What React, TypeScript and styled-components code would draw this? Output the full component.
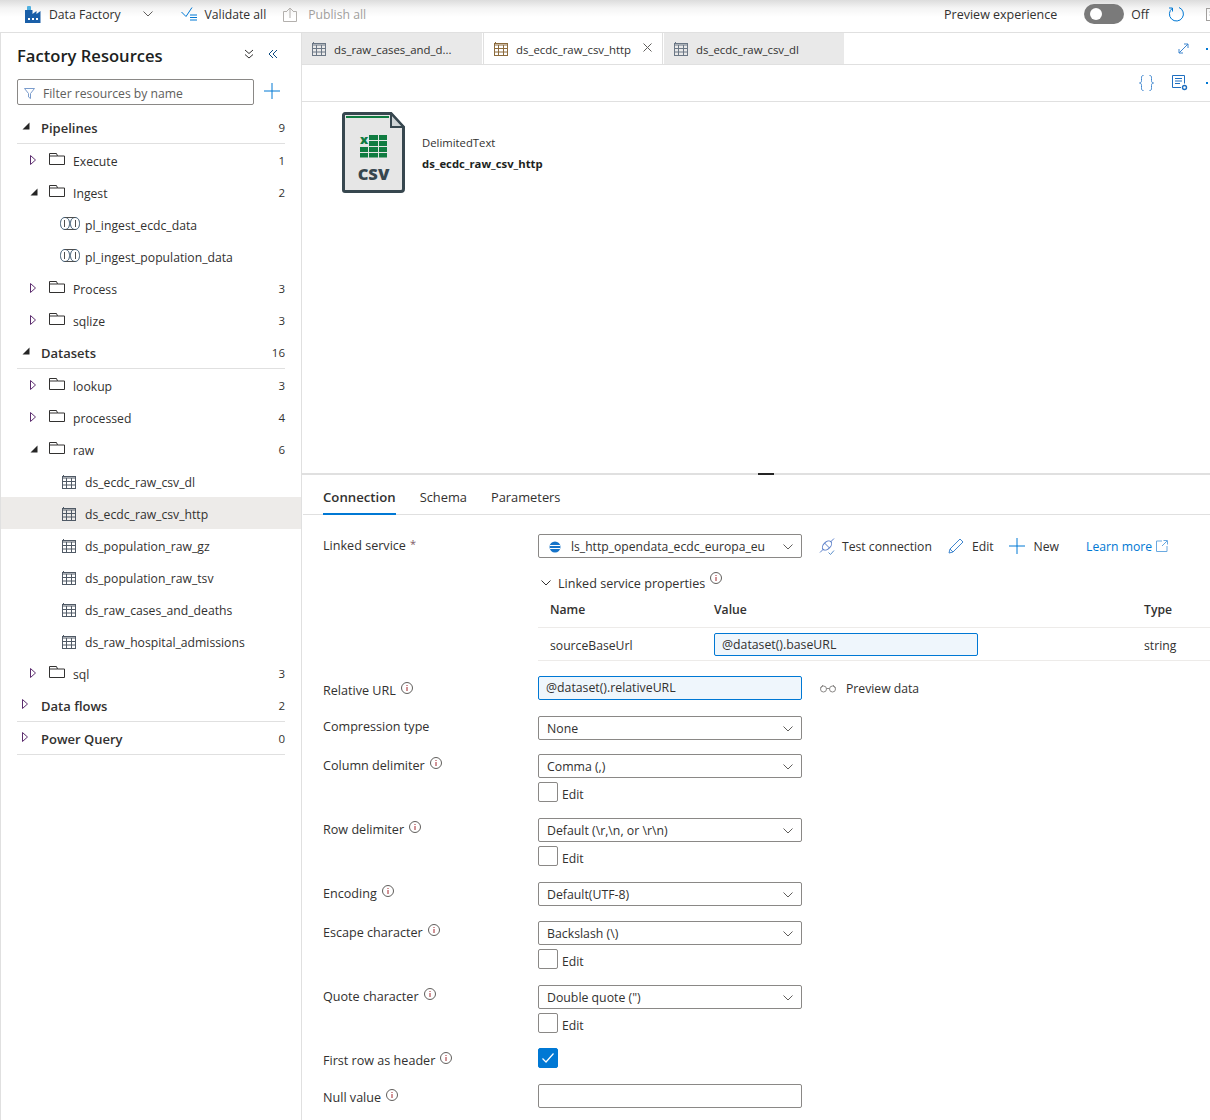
import React from 'react';
import styled, { createGlobalStyle } from 'styled-components';

const GlobalStyle = createGlobalStyle`
  html, body {
    margin: 0;
    padding: 0;
    background: #fff;
    font-family: 'Open Sans', 'Noto Sans', sans-serif;
    color: #323130;
  }
  * { box-sizing: border-box; }
`;

const Page = styled.div`
  width: 1210px;
  height: 1120px;
  display: flex;
  flex-direction: column;
  overflow: hidden;
  font-size: 12.2px;
`;

/* top command bar */
const TopBar = styled.div`
  height: 33px;
  flex: none;
  display: flex;
  align-items: center;
  padding: 0 0 4px 25px;
  background: linear-gradient(#dcdcdc 0, #f4f4f4 8px, #fff 17px);
  border-bottom: 1px solid #e0e0e0;
`;

const BarItem = styled.div<{ $muted?: boolean; $left?: number; $size?: number }>`
  display: flex;
  align-items: center;
  gap: 8px;
  margin-left: ${(p) => p.$left ?? 0}px;
  font-size: ${(p) => p.$size ?? 12.2}px;
  color: ${(p) => (p.$muted ? '#a19f9d' : '#323130')};
  white-space: nowrap;
  flex: none;
`;

const PublishText = styled.span`
  margin-left: 3px;
`;

const Toggle = styled.div`
  width: 40px;
  height: 20px;
  border-radius: 10px;
  background: #7a7a7a;
  display: flex;
  align-items: center;
  padding-left: 6px;
  margin-left: 27px;
  flex: none;
  &::before {
    content: '';
    width: 12px;
    height: 12px;
    border-radius: 50%;
    background: #fff;
  }
`;

const Body = styled.div`
  flex: 1;
  display: flex;
  min-height: 0;
`;

/* left resource tree */
const Sidebar = styled.aside`
  width: 302px;
  flex: none;
  border-left: 1px solid #e0e0e0;
  border-right: 1px solid #e0e0e0;
`;

const SideHead = styled.div`
  display: flex;
  align-items: center;
  height: 46px;
  padding: 0 23px 2px 16px;
`;

const SideTitle = styled.h2`
  margin: 0 auto 0 0;
  font-size: 16.6px;
  font-weight: 600;
  color: #201f1e;
`;

const SideTools = styled.div`
  display: flex;
  gap: 14px;
  margin-top: -2px;
`;

const FilterRow = styled.div`
  display: flex;
  align-items: center;
  gap: 10px;
  padding-left: 16px;
`;

const FilterBox = styled.div`
  width: 237px;
  height: 26px;
  border: 1px solid #8a8886;
  border-radius: 2px;
  display: flex;
  align-items: center;
  gap: 8px;
  padding: 2px 0 0 6px;
  color: #605e5c;
`;

const FilterAdd = styled.span`
  display: flex;
  margin-top: -2px;
`;

const Tree = styled.div`
  margin-top: 7px;
`;

const GroupRow = styled.div`
  height: 32px;
  margin: 0 16px 1px 16px;
  border-bottom: 1px solid #e0e0e0;
  display: flex;
  align-items: center;
  font-size: 13px;
  font-weight: 600;
  color: #323130;
`;

const TreeRow = styled.div<{ $depth: number; $selected?: boolean }>`
  height: 32px;
  display: flex;
  align-items: center;
  padding-right: 16px;
  padding-left: ${(p) => (p.$depth === 1 ? 29 : 59)}px;
  ${(p) =>
    p.$selected &&
    `
    background: #edebe9;
    margin: -1px 0 1px;
    padding-top: 2px;
  `}
`;

const Twisty = styled.span<{ $width: number; $inset?: number; $lift?: number }>`
  width: ${(p) => p.$width}px;
  flex: none;
  display: flex;
  align-items: center;
  margin-top: -${(p) => p.$lift ?? 3}px;
  padding-left: ${(p) => p.$inset ?? 0}px;
`;

const RowLabel = styled.span`
  flex: 1;
  white-space: nowrap;
`;

const Count = styled.span`
  font-size: 11.5px;
  font-weight: 400;
  margin-top: -1px;
`;

/* main area */
const Main = styled.main`
  flex: 1;
  min-width: 0;
  position: relative;
`;

const TabStrip = styled.div`
  height: 32px;
  display: flex;
  align-items: stretch;
  gap: 1px;
  border-bottom: 1px solid #e0e0e0;
`;

const DocTab = styled.div<{ $active?: boolean }>`
  width: 180px;
  height: 31px;
  display: flex;
  align-items: center;
  gap: 8px;
  padding: 1px 0 0 10px;
  font-size: 11.4px;
  background: ${(p) => (p.$active ? '#fff' : '#e9e9e9')};
  white-space: nowrap;
  border-left: ${(p) => (p.$active ? '1px solid #e0e0e0' : 'none')};
  border-right: ${(p) => (p.$active ? '1px solid #e0e0e0' : 'none')};
  font-weight: ${(p) => (p.$active ? 500 : 400)};
`;

const TabClose = styled.span`
  margin-left: auto;
  margin-right: 10px;
  margin-top: -3px;
  display: flex;
`;

const StripEnd = styled.div`
  margin-left: auto;
  display: flex;
  align-items: center;
  gap: 17px;
  margin-right: 2px;
`;

const ActionBar = styled.div`
  height: 37px;
  display: flex;
  align-items: center;
  justify-content: flex-end;
  gap: 18px;
  padding-right: 2px;
  border-bottom: 1px solid #e0e0e0;
`;

const Dot = styled.span`
  width: 2px;
  height: 2px;
  background: #0078d4;
`;

const Canvas = styled.div`
  height: 371px;
  padding: 10px 0 0 40px;
  display: flex;
  align-items: flex-start;
  gap: 17px;
`;

const DatasetMeta = styled.div`
  padding-top: 23px;
  display: flex;
  flex-direction: column;
  gap: 5px;
  line-height: 16px;
  font-size: 11.3px;
`;

const DatasetName = styled.strong`
  font-weight: 700;
  color: #201f1e;
`;

const Splitter = styled.div`
  height: 2px;
  background: #e0e0e0;
`;

const SplitHandle = styled.span`
  position: absolute;
  left: 456px;
  top: 440px;
  width: 16px;
  height: 2px;
  background: #252525;
`;

const DetailTabs = styled.div`
  height: 40px;
  margin-left: 1px;
  padding-left: 20px;
  display: flex;
  gap: 24px;
  border-bottom: 1px solid #e0e0e0;
`;

const DetailTab = styled.div<{ $active?: boolean }>`
  height: 40px;
  line-height: 45px;
  font-size: ${(p) => (p.$active ? 13.2 : 12.85)}px;
  font-weight: ${(p) => (p.$active ? 600 : 400)};
  border-bottom: 2px solid ${(p) => (p.$active ? '#0078d4' : 'transparent')};
`;

const Form = styled.div`
  padding-left: 21px;
`;

const Field = styled.div<{ $top: number }>`
  display: grid;
  grid-template-columns: 215px 1fr;
  margin-top: ${(p) => p.$top}px;
`;

// zero height so the label text never pushes the row taller than its control
const Label = styled.div<{ $nudge?: number }>`
  display: flex;
  align-items: flex-start;
  height: 0;
  line-height: 24px;
  gap: 5px;
  font-size: 12.6px;
  font-weight: 500;
  margin-top: ${(p) => p.$nudge ?? 0}px;
`;

const Required = styled.span`
  color: #7d5a66;
  margin-left: -1px;
  font-size: 11px;
  line-height: 20px;
`;

const InfoMark = styled.span`
  margin-top: 3px;
  display: flex;
`;

const Control = styled.div`
  display: flex;
  flex-direction: column;
  gap: 4px;
`;

const ControlLine = styled.div`
  display: flex;
  align-items: center;
`;

const Select = styled.div<{ $indent?: number; $size?: number }>`
  width: 264px;
  height: 24px;
  border: 1px solid #8a8886;
  border-radius: 2px;
  display: flex;
  align-items: center;
  gap: 10px;
  padding: 1px 8px 0 ${(p) => p.$indent ?? 8}px;
  font-size: ${(p) => p.$size ?? 12.3}px;
  white-space: nowrap;
  flex: none;
`;

const SelectChevron = styled.span`
  margin-left: auto;
  display: flex;
`;

const TextBox = styled.div<{ $focused?: boolean; $height?: number }>`
  width: 264px;
  height: ${(p) => p.$height ?? 24}px;
  line-height: ${(p) => (p.$height ?? 24) - 2}px;
  padding-left: 7px;
  font-size: 12.3px;
  border: 1px solid ${(p) => (p.$focused ? '#0078d4' : '#8a8886')};
  border-radius: 2px;
  background: ${(p) => (p.$focused ? '#eff6fc' : '#fff')};
  flex: none;
`;

const CheckLine = styled.label`
  display: flex;
  align-items: center;
  gap: 4px;
  height: 20px;
`;

const CheckText = styled.span`
  margin-top: 4px;
`;

const Check = styled.span<{ $checked?: boolean }>`
  width: 20px;
  height: 20px;
  border-radius: 2px;
  border: 1px solid ${(p) => (p.$checked ? '#0078d4' : '#8a8886')};
  background: ${(p) => (p.$checked ? '#0078d4' : '#fff')};
  display: flex;
  align-items: center;
  justify-content: center;
`;

const LinkAction = styled.span<{ $left: number; $gap?: number }>`
  display: flex;
  align-items: center;
  gap: ${(p) => p.$gap ?? 6}px;
  margin-left: ${(p) => p.$left}px;
  white-space: nowrap;
`;

const LearnMore = styled(LinkAction)`
  color: #0078d4;
`;

const PropsHeading = styled.div`
  margin-top: 15px;
  height: 20px;
  display: flex;
  align-items: center;
  gap: 6px;
  padding-left: 2px;
  font-size: 12.6px;
  font-weight: 500;
`;

const HeadingInfo = styled.span`
  margin: -11px 0 0 -1px;
  display: flex;
`;

const PropsRow = styled.div<{ $head?: boolean }>`
  display: grid;
  grid-template-columns: 164px 430px 1fr;
  align-items: center;
  height: ${(p) => (p.$head ? 35 : 33)}px;
  padding-left: 12px;
  border-bottom: 1px solid #edebe9;
  font-weight: ${(p) => (p.$head ? 600 : 400)};
  padding-bottom: ${(p) => (p.$head ? 2 : 0)}px;
`;

const PropsCell = styled.span`
  padding-top: 2px;
`;

/* icons */
const BLUE = '#0078d4';
const INK = '#323130';

const Svg: React.FC<{ size: number; h?: number; vb?: string; children: React.ReactNode }> = ({ size, h, vb, children }) => (
  <svg
    width={size}
    height={h ?? size}
    viewBox={vb ?? `0 0 ${size} ${h ?? size}`}
    fill="none"
    style={{ flex: 'none', display: 'block' }}
  >
    {children}
  </svg>
);

const FactoryIcon = () => (
  <Svg size={16} h={17}>
    <rect x="2" y="0" width="4" height="5" rx="1" fill="#50b0e0" />
    <path d="M0 4h7.5v4l4-3v3l4-3v12H0z" fill="#1a5fa8" />
    <path d="M3 12h2v2H3zM7 12h2v2H7zM11 12h2v2h-2z" fill="#fff" />
  </Svg>
);

const ChevronDown: React.FC<{ size?: number; color?: string }> = ({ size = 10, color = '#605e5c' }) => (
  <Svg size={size} h={6} vb="0 0 10 6">
    <path d="M.5.5 5 5 9.5.5" stroke={color} />
  </Svg>
);

const ValidateIcon = () => (
  <Svg size={16} h={14}>
    <path d="M.5 5 5 9.5 11 .5" stroke={BLUE} />
    <path d="M9 8h7M9 10.5h7M9 13h7" stroke={BLUE} />
  </Svg>
);

const PublishIcon = () => (
  <Svg size={14} h={15}>
    <path d="M4 4.500H.5v10h13v-10H10" stroke="#b3b0ad" />
    <path d="M7 11V1M4 4l3-3 3 3" stroke="#b3b0ad" />
  </Svg>
);

const RefreshIcon = () => (
  <Svg size={16} h={16}>
    <path d="M4.500 2.200a7 7 0 1 0 6.500-.7" stroke={BLUE} />
    <path d="M4.500 5.500V2H1" stroke={BLUE} />
  </Svg>
);

const ClippedBoardIcon = () => (
  <Svg size={14} h={14}>
    <rect x=".5" y="1.500" width="13" height="12" stroke="#a19f9d" />
    <path d="M3 5h8M3 8h8" stroke="#c8c6c4" />
  </Svg>
);

const DoubleDown = () => (
  <Svg size={10} h={10}>
    <path d="M1 1l4 3.500L9 1M1 5.500 5 9l4-3.500" stroke={INK} />
  </Svg>
);

const DoubleLeft = () => (
  <Svg size={10} h={10}>
    <path d="M5 1 1 5l4 4M9 1 5 5l4 4" stroke="#0b4a80" />
  </Svg>
);

const FilterIcon = () => (
  <Svg size={11} h={11}>
    <path d="M.5.5h10L6.500 5.500v5l-2-1.500V5.500z" stroke="#7a9ccc" />
  </Svg>
);

const PlusIcon: React.FC<{ size?: number }> = ({ size = 15 }) => (
  <Svg size={size}>
    <path d={`M${size / 2} 0v${size}M0 ${size / 2}h${size}`} stroke={BLUE} />
  </Svg>
);

const Expanded = () => (
  <Svg size={8} h={8}>
    <path d="M7.500.5v7H.5z" fill="#252525" />
  </Svg>
);

const Collapsed = () => (
  <Svg size={6} h={10}>
    <path d="M.5.5 5.500 5 .5 9.500z" stroke="#5c2d6e" />
  </Svg>
);

const FolderIcon = () => (
  <Svg size={16} h={12}>
    <path d="M.5 11.500V.5h7l1 2.500h7v8.500zM.5 3h8" stroke={INK} />
  </Svg>
);

const PipelineIcon = () => (
  <Svg size={20} h={13}>
    <path d="M5 .5C2 .5.5 3 .5 6.500S2 12.500 5 12.500 9.500 10 9.500 6.500 8 .5 5 .5z" stroke="#3d5a73" />
    <path d="M15 .5c3 0 4.500 2.500 4.500 6s-1.500 6-4.500 6-4.500-2.500-4.500-6S12 .5 15 .5z" stroke="#3d5a73" />
    <path d="M5 .5h10M5 12.500h10M4.500 3v7M15.500 3v7" stroke="#4f4f4f" />
  </Svg>
);

const TableIcon: React.FC<{ color?: string }> = ({ color = '#6b7785' }) => (
  <Svg size={14} h={14}>
    <path d="M1.500 0v1.500" stroke={color} />
    <rect x=".5" y="1.500" width="13" height="12" stroke={color} />
    <path d="M.5 3h13M.5 6.500h13M.5 10h13M4.500 3v10.500M9.500 3v10.500" stroke={color} />
  </Svg>
);

const CloseIcon = () => (
  <Svg size={9} h={9}>
    <path d="M.5.5l8 8M8.500.5l-8 8" stroke="#605e5c" />
  </Svg>
);

const ExpandIcon = () => (
  <Svg size={11} h={11}>
    <path d="M1 10 10 1M6 1h4v4M1 6v4h4" stroke="#3f86cf" />
  </Svg>
);

const BracesIcon = () => (
  <Svg size={15} h={16}>
    <path d="M4.500.5c-2 0-2 1-2 3v2c0 1.500-.5 2.500-2 2.500 1.500 0 2 1 2 2.500v2c0 2 0 3 2 3" stroke="#3f86cf" />
    <path d="M10.500.5c2 0 2 1 2 3v2c0 1.500.5 2.500 2 2.500-1.500 0-2 1-2 2.500v2c0 2 0 3-2 3" stroke="#3f86cf" />
  </Svg>
);

const PropertiesIcon = () => (
  <Svg size={16} h={16}>
    <path d="M9 12.500H.5V.5h12v8" stroke="#1f6fc0" />
    <path d="M3 3.500h7M3 6h7M3 8.500h5" stroke="#1f6fc0" />
    <circle cx="12.500" cy="12.500" r="2" stroke="#1f6fc0" strokeWidth="1.400" />
  </Svg>
);

const CsvFileIcon = () => (
  <Svg size={63} h={81}>
    <path d="M3 1.500h46L61.500 15v62a2.500 2.500 0 0 1-2.500 2.500H3A1.500 1.500 0 0 1 1.500 78V3A1.500 1.500 0 0 1 3 1.500z" fill="#e6e6e6" stroke="#37474f" strokeWidth="3" />
    <path d="M49 1.500V15h12.500z" fill="#cfd4d6" stroke="#37474f" strokeWidth="2" />
    <rect x="4" y="4" width="43" height="2" fill="#107c41" />
    <g fill="#107c41">
      <rect x="27" y="23" width="9" height="5" />
      <rect x="37" y="23" width="8" height="5" />
      <rect x="27" y="29" width="9" height="5" />
      <rect x="37" y="29" width="8" height="5" />
      <rect x="18" y="35" width="8" height="5" />
      <rect x="27" y="35" width="9" height="5" />
      <rect x="37" y="35" width="8" height="5" />
      <rect x="18" y="41" width="8" height="4.500" />
      <rect x="27" y="41" width="9" height="4.500" />
      <rect x="37" y="41" width="8" height="4.500" />
    </g>
    <text x="18" y="32" fontSize="13" fontWeight="800" fill="#107c41" fontFamily="'Open Sans', sans-serif">x</text>
    <text x="31.500" y="68" textAnchor="middle" fontSize="16.500" fontWeight="800" fill="#37474f" fontFamily="'Open Sans', sans-serif">CSV</text>
  </Svg>
);

const InfoIcon = () => (
  <Svg size={12} h={12}>
    <circle cx="6" cy="6" r="5.500" stroke="#605e5c" />
    <path d="M6 5v4M6 3v1" stroke="#a4262c" />
  </Svg>
);

const GlobeIcon = () => (
  <Svg size={12} h={12}>
    <circle cx="6" cy="6" r="5.500" fill="#1573c9" />
    <path d="M1 4.500h10M1 7.500h10" stroke="#fff" />
  </Svg>
);

const PlugIcon = () => (
  <Svg size={17} h={17}>
    <ellipse cx="8" cy="7.500" rx="3.500" ry="5.500" transform="rotate(45 8 7.500)" stroke="#5b7fc9" />
    <path d="M5.500 5 10.500 10M1 14.500l3.500-3.500M11.500 4 15 .5" stroke="#5b7fc9" />
    <path d="M9.500 14.500l2 2 3.500-4" stroke="#5b8fc9" />
  </Svg>
);

const PencilIcon = () => (
  <Svg size={16} h={16}>
    <path d="M1 15l1-4L12 1l3 3L5 14z" stroke="#3f86cf" />
    <path d="M2 11l3 3" stroke="#3f86cf" />
  </Svg>
);

const ExternalIcon = () => (
  <Svg size={12} h={12}>
    <path d="M6 1H.5v10.500H11V6" stroke="#6aa9e0" />
    <path d="M6 6l5-5M7.500.5h4v4" stroke="#6aa9e0" />
  </Svg>
);

const GlassesIcon = () => (
  <Svg size={16} h={9}>
    <circle cx="3.500" cy="5" r="3" stroke="#8a8886" />
    <circle cx="12.500" cy="5" r="3" stroke="#8a8886" />
    <path d="M6.500 4.500h3M.5 4 3 1M15.500 4 13 1" stroke="#8a8886" />
  </Svg>
);

const CheckMark = () => (
  <Svg size={12} h={10}>
    <path d="M.5 5.500 4 9 11.500.5" stroke="#fff" strokeWidth="1.200" />
  </Svg>
);

/* data */
type LeafKind = 'pipeline' | 'table';

interface FolderData {
  name: string;
  count: number;
  open?: boolean;
  kind?: LeafKind;
  leaves?: string[];
}

const pipelineFolders: FolderData[] = [
  { name: 'Execute', count: 1 },
  { name: 'Ingest', count: 2, open: true, kind: 'pipeline', leaves: ['pl_ingest_ecdc_data', 'pl_ingest_population_data'] },
  { name: 'Process', count: 3 },
  { name: 'sqlize', count: 3 },
];

const datasetFolders: FolderData[] = [
  { name: 'lookup', count: 3 },
  { name: 'processed', count: 4 },
  {
    name: 'raw',
    count: 6,
    open: true,
    kind: 'table',
    leaves: [
      'ds_ecdc_raw_csv_dl',
      'ds_ecdc_raw_csv_http',
      'ds_population_raw_gz',
      'ds_population_raw_tsv',
      'ds_raw_cases_and_deaths',
      'ds_raw_hospital_admissions',
    ],
  },
  { name: 'sql', count: 3 },
];

const Group: React.FC<{ name: string; count: number; open?: boolean }> = ({ name, count, open }) => (
  <GroupRow>
    <Twisty $width={24} $inset={5}>
      {open ? <Expanded /> : <Collapsed />}
    </Twisty>
    <RowLabel>{name}</RowLabel>
    <Count>{count}</Count>
  </GroupRow>
);

const Folder: React.FC<{ data: FolderData }> = ({ data }) => (
  <>
    <TreeRow $depth={1}>
      <Twisty $width={19}>{data.open ? <Expanded /> : <Collapsed />}</Twisty>
      <Twisty $width={24} $lift={4}>
        <FolderIcon />
      </Twisty>
      <RowLabel>{data.name}</RowLabel>
      <Count>{data.count}</Count>
    </TreeRow>
    {data.leaves &&
      data.leaves.map((leaf) => (
        <TreeRow $depth={2} key={leaf} $selected={leaf === 'ds_ecdc_raw_csv_http'}>
          <Twisty $width={25} $inset={data.kind === 'pipeline' ? 0 : 2} $lift={data.kind === 'pipeline' ? 3 : 1}>
            {data.kind === 'pipeline' ? <PipelineIcon /> : <TableIcon color="#505a66" />}
          </Twisty>
          <RowLabel>{leaf}</RowLabel>
        </TreeRow>
      ))}
  </>
);

const FieldLabel: React.FC<{ text: string; nudge?: number }> = ({ text, nudge }) => (
  <Label $nudge={nudge}>
    {text}
    <InfoMark>
      <InfoIcon />
    </InfoMark>
  </Label>
);

const EditCheck = () => (
  <CheckLine>
    <Check />
    <CheckText>Edit</CheckText>
  </CheckLine>
);

const DropField: React.FC<{ label: string; value: string; top: number; nudge?: number; info?: boolean; edit?: boolean }> = ({
  label,
  value,
  top,
  nudge,
  info = true,
  edit,
}) => (
  <Field $top={top}>
    {info ? <FieldLabel text={label} nudge={nudge} /> : <Label $nudge={nudge}>{label}</Label>}
    <Control>
      <Select>
        {value}
        <SelectChevron>
          <ChevronDown />
        </SelectChevron>
      </Select>
      {edit && <EditCheck />}
    </Control>
  </Field>
);

const App: React.FC = () => (
  <Page>
    <GlobalStyle />
    <TopBar>
      <BarItem>
        <FactoryIcon />
        Data Factory
      </BarItem>
      <BarItem $left={22}>
        <ChevronDown />
      </BarItem>
      <BarItem $left={28}>
        <ValidateIcon />
        Validate all
      </BarItem>
      <BarItem $left={17} $muted>
        <PublishIcon />
        <PublishText>Publish all</PublishText>
      </BarItem>
      <BarItem $left={578} $size={12.5}>
        Preview experience
      </BarItem>
      <Toggle />
      <BarItem $left={7}>Off</BarItem>
      <BarItem $left={19}>
        <RefreshIcon />
      </BarItem>
      <BarItem $left={22}>
        <ClippedBoardIcon />
      </BarItem>
    </TopBar>
    <Body>
      <Sidebar>
        <SideHead>
          <SideTitle>Factory Resources</SideTitle>
          <SideTools>
            <DoubleDown />
            <DoubleLeft />
          </SideTools>
        </SideHead>
        <FilterRow>
          <FilterBox>
            <FilterIcon />
            Filter resources by name
          </FilterBox>
          <FilterAdd>
            <PlusIcon size={16} />
          </FilterAdd>
        </FilterRow>
        <Tree>
          <Group name="Pipelines" count={9} open />
          {pipelineFolders.map((f) => (
            <Folder data={f} key={f.name} />
          ))}
          <Group name="Datasets" count={16} open />
          {datasetFolders.map((f) => (
            <Folder data={f} key={f.name} />
          ))}
          <Group name="Data flows" count={2} />
          <Group name="Power Query" count={0} />
        </Tree>
      </Sidebar>
      <Main>
        <TabStrip>
          <DocTab>
            <TableIcon />
            ds_raw_cases_and_d...
          </DocTab>
          <DocTab $active>
            <TableIcon color="#8c6b3c" />
            ds_ecdc_raw_csv_http
            <TabClose>
              <CloseIcon />
            </TabClose>
          </DocTab>
          <DocTab>
            <TableIcon />
            ds_ecdc_raw_csv_dl
          </DocTab>
          <StripEnd>
            <ExpandIcon />
            <Dot />
          </StripEnd>
        </TabStrip>
        <ActionBar>
          <BracesIcon />
          <PropertiesIcon />
          <Dot />
        </ActionBar>
        <Canvas>
          <CsvFileIcon />
          <DatasetMeta>
            <span>DelimitedText</span>
            <DatasetName>ds_ecdc_raw_csv_http</DatasetName>
          </DatasetMeta>
        </Canvas>
        <Splitter />
        <SplitHandle />
        <DetailTabs>
          <DetailTab $active>Connection</DetailTab>
          <DetailTab>Schema</DetailTab>
          <DetailTab>Parameters</DetailTab>
        </DetailTabs>
        <Form>
          <Field $top={19}>
            <Label>
              Linked service
              <Required>*</Required>
            </Label>
            <div>
              <ControlLine>
                <Select $indent={10} $size={12.15}>
                  <GlobeIcon />
                  ls_http_opendata_ecdc_europa_eu
                  <SelectChevron>
                    <ChevronDown />
                  </SelectChevron>
                </Select>
                <LinkAction $left={17}>
                  <PlugIcon />
                  Test connection
                </LinkAction>
                <LinkAction $left={16} $gap={8}>
                  <PencilIcon />
                  Edit
                </LinkAction>
                <LinkAction $left={15} $gap={9}>
                  <PlusIcon size={16} />
                  New
                </LinkAction>
                <LearnMore $left={27} $gap={4}>
                  Learn more
                  <ExternalIcon />
                </LearnMore>
              </ControlLine>
              <PropsHeading>
                <ChevronDown size={12} color={INK} />
                Linked service properties
                <HeadingInfo>
                  <InfoIcon />
                </HeadingInfo>
              </PropsHeading>
              <PropsRow $head>
                <span>Name</span>
                <span>Value</span>
                <span>Type</span>
              </PropsRow>
              <PropsRow>
                <PropsCell>sourceBaseUrl</PropsCell>
                <TextBox $focused $height={23}>
                  @dataset().baseURL
                </TextBox>
                <PropsCell>string</PropsCell>
              </PropsRow>
            </div>
          </Field>
          <Field $top={15}>
            <FieldLabel text="Relative URL" nudge={3} />
            <ControlLine>
              <TextBox $focused>@dataset().relativeURL</TextBox>
              <LinkAction $left={18} $gap={10}>
                <GlassesIcon />
                Preview data
              </LinkAction>
            </ControlLine>
          </Field>
          <DropField label="Compression type" value="None" top={16} nudge={-1} info={false} />
          <DropField label="Column delimiter" value="Comma (,)" top={14} edit />
          <DropField label="Row delimiter" value="Default (\r,\n, or \r\n)" top={16} edit />
          <DropField label="Encoding" value="Default(UTF-8)" top={16} />
          <DropField label="Escape character" value="Backslash (\)" top={15} edit />
          <DropField label="Quote character" value={'Double quote (")'} top={16} edit />
          <Field $top={15}>
            <FieldLabel text="First row as header" nudge={1} />
            <Control>
              <Check $checked>
                <CheckMark />
              </Check>
            </Control>
          </Field>
          <Field $top={16}>
            <FieldLabel text="Null value" nudge={2} />
            <TextBox />
          </Field>
        </Form>
      </Main>
    </Body>
  </Page>
);

export default App;
